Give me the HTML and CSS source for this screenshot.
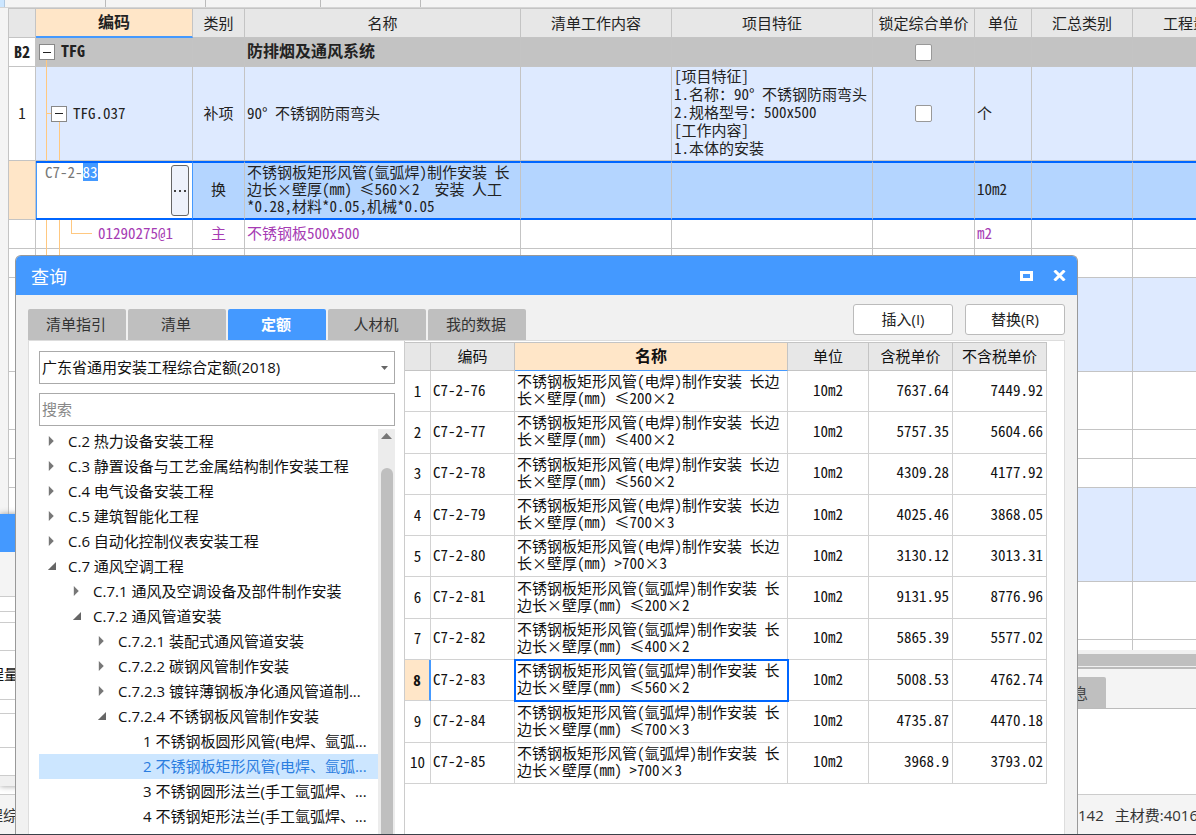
FILE: index.html
```html
<!DOCTYPE html>
<html lang="zh-CN">
<head>
<meta charset="utf-8">
<title>查询</title>
<link rel="stylesheet" href="styles.css">
</head>
<body>
<main class="app">
  <div class="topstrip"><i class="chip"></i><i class="seg seg-a"></i><i class="seg seg-b"></i><i class="seg seg-c"></i><i class="seg seg-b"></i></div>
  <div class="workspace">
    <div class="gutter"></div>
    <div class="sheet">
      <table class="grid">
        <colgroup><col class="c-no"><col class="c-code"><col class="c-kind"><col class="c-name"><col class="c-work"><col class="c-feat"><col class="c-lock"><col class="c-unit"><col class="c-sum"><col class="c-qty"></colgroup>
        <thead>
          <tr><th></th><th class="current">编码</th><th>类别</th><th>名称</th><th>清单工作内容</th><th>项目特征</th><th>锁定综合单价</th><th>单位</th><th>汇总类别</th><th>工程量</th></tr>
        </thead>
        <tbody>
          <tr class="r-group"><td class="no">B2</td><td class="code"><div class="node"><button class="toggle" aria-label="折叠"></button><span>TFG</span></div><i class="guide g1 from-node"></i></td><td></td><td>防排烟及通风系统</td><td></td><td></td><td class="mid"><input type="checkbox" aria-label="锁定综合单价"></td><td></td><td></td><td></td></tr>
          <tr class="r-item"><td class="no">1</td><td class="code"><i class="guide g1"></i><i class="guide g2 from-mid"></i><i class="arm"></i><div class="node lvl2"><button class="toggle" aria-label="折叠"></button><span>TFG.037</span></div></td><td class="mid">补项</td><td>90° 不锈钢防雨弯头</td><td></td><td class="feat">[项目特征]<br>1.名称：90° 不锈钢防雨弯头<br>2.规格型号：500x500<br>[工作内容]<br>1.本体的安装</td><td class="mid"><input type="checkbox" aria-label="锁定综合单价"></td><td>个</td><td></td><td></td></tr>
          <tr class="r-active"><td class="no"></td><td class="code edit"><div class="editor"><input id="code" type="text" value="C7-2-83" aria-label="编码"><button class="more" aria-label="更多"><svg viewBox="0 0 14 4"><path d="M1 1h2v2H1zM6 1h2v2H6zM11 1h2v2h-2z"/></svg></button></div></td><td class="mid">换</td><td>不锈钢板矩形风管(氩弧焊)制作安装 长边长×壁厚(mm) ≤560×2&nbsp; 安装 人工*0.28,材料*0.05,机械*0.05</td><td></td><td></td><td></td><td>10m2</td><td></td><td></td></tr>
          <tr class="r-mat"><td class="no"></td><td class="code"><i class="guide g1"></i><i class="guide g2"></i><i class="elbow"></i><div class="node lvl3">01290275@1</div></td><td class="mid">主</td><td>不锈钢板500x500</td><td></td><td></td><td></td><td>m2</td><td></td><td></td></tr>
          <tr class="r-line"><td></td><td class="code"><i class="guide g1"></i><i class="guide g2"></i></td><td></td><td></td><td></td><td></td><td></td><td></td><td></td><td></td></tr>
          <tr class="r-item"><td></td><td></td><td></td><td></td><td></td><td></td><td></td><td></td><td></td><td></td></tr>
          <tr class="r-double"><td></td><td></td><td></td><td></td><td></td><td></td><td></td><td></td><td></td><td></td></tr>
          <tr class="r-line"><td></td><td></td><td></td><td></td><td></td><td></td><td></td><td></td><td></td><td></td></tr>
          <tr class="r-line"><td></td><td></td><td></td><td></td><td></td><td></td><td></td><td></td><td></td><td></td></tr>
          <tr class="r-item"><td></td><td></td><td></td><td></td><td></td><td></td><td></td><td></td><td></td><td></td></tr>
          <tr class="r-double"><td></td><td></td><td></td><td></td><td></td><td></td><td></td><td></td><td></td><td></td></tr>
          <tr class="r-last"><td></td><td></td><td></td><td></td><td></td><td></td><td></td><td></td><td></td><td></td></tr>
        </tbody>
      </table>
    </div>
  </div>
  <div class="hscroll"></div>
  <div class="lowtabs"><div class="lowtab">信息</div></div>
  <div class="lowpane"></div>
  <footer class="status"><span class="st-left">程综</span><span class="st-right"><span>142</span><span>主材费:4016</span></span></footer>

  <aside class="backwin">
    <div class="bw-title"></div>
    <div class="bw-bar"></div>
    <div class="bw-row h15"></div>
    <div class="bw-row h11"></div>
    <div class="bw-row h28"></div>
    <div class="bw-row h49"><span>程量</span></div>
    <div class="bw-row h14"></div>
    <div class="bw-row h34"></div>
    <div class="bw-row h28"></div>
    <div class="bw-foot"></div>
  </aside>

  <section class="dialog" aria-label="查询">
    <header class="titlebar">
      <h1>查询</h1>
      <button aria-label="最大化"><svg width="13" height="10" viewBox="0 0 13 10"><path d="M1.500 1.500h10v7h-10z" fill="none" stroke="#fff" stroke-width="3"/></svg></button>
      <button aria-label="关闭"><svg width="13" height="11" viewBox="0 0 13 11"><path d="M1.500 .5l10 10M11.500 .5l-10 10" stroke="#fff" stroke-width="3"/></svg></button>
    </header>
    <div class="toolbar">
      <nav class="tabs"><button>清单指引</button><button>清单</button><button class="on">定额</button><button>人材机</button><button>我的数据</button></nav>
      <div class="actions"><button>插入(I)</button><button>替换(R)</button></div>
    </div>
    <div class="panes">
      <div class="side">
        <div class="picker">
          <select class="field" aria-label="定额库"><option>广东省通用安装工程综合定额(2018)</option></select>
          <svg width="7" height="4" viewBox="0 0 7 4"><path d="M0 0h7L3.500 4z" fill="#666"/></svg>
        </div>
        <input class="field" type="text" placeholder="搜索" aria-label="搜索">
        <div class="treebox">
          <ul class="tree">
            <li class="l1 shut">C.2 热力设备安装工程</li>
            <li class="l1 shut">C.3 静置设备与工艺金属结构制作安装工程</li>
            <li class="l1 shut">C.4 电气设备安装工程</li>
            <li class="l1 shut">C.5 建筑智能化工程</li>
            <li class="l1 shut">C.6 自动化控制仪表安装工程</li>
            <li class="l1 open">C.7 通风空调工程</li>
            <li class="l2 shut">C.7.1 通风及空调设备及部件制作安装</li>
            <li class="l2 open">C.7.2 通风管道安装</li>
            <li class="l3 shut">C.7.2.1 装配式通风管道安装</li>
            <li class="l3 shut">C.7.2.2 碳钢风管制作安装</li>
            <li class="l3 shut">C.7.2.3 镀锌薄钢板净化通风管道制...</li>
            <li class="l3 open">C.7.2.4 不锈钢板风管制作安装</li>
            <li class="l4">1 不锈钢板圆形风管(电焊、氩弧...</li>
            <li class="l4 picked">2 不锈钢板矩形风管(电焊、氩弧...</li>
            <li class="l4">3 不锈钢圆形法兰(手工氩弧焊、...</li>
            <li class="l4">4 不锈钢矩形法兰(手工氩弧焊、...</li>
          </ul>
          <div class="vscroll"><svg width="11" height="6" viewBox="0 0 11 6"><path d="M0 6L5.500 0 11 6z" fill="#777"/></svg><div class="thumb"></div></div>
        </div>
      </div>
      <div class="result">
        <table class="list">
          <colgroup><col class="q-no"><col class="q-code"><col class="q-name"><col class="q-unit"><col class="q-tax"><col class="q-net"></colgroup>
          <thead><tr><th></th><th>编码</th><th class="current">名称</th><th>单位</th><th>含税单价</th><th>不含税单价</th></tr></thead>
          <tbody>
            <tr><td>1</td><td>C7-2-76</td><td>不锈钢板矩形风管(电焊)制作安装 长边长×壁厚(mm) ≤200×2</td><td>10m2</td><td>7637.64</td><td>7449.92</td></tr>
            <tr><td>2</td><td>C7-2-77</td><td>不锈钢板矩形风管(电焊)制作安装 长边长×壁厚(mm) ≤400×2</td><td>10m2</td><td>5757.35</td><td>5604.66</td></tr>
            <tr><td>3</td><td>C7-2-78</td><td>不锈钢板矩形风管(电焊)制作安装 长边长×壁厚(mm) ≤560×2</td><td>10m2</td><td>4309.28</td><td>4177.92</td></tr>
            <tr><td>4</td><td>C7-2-79</td><td>不锈钢板矩形风管(电焊)制作安装 长边长×壁厚(mm) ≤700×3</td><td>10m2</td><td>4025.46</td><td>3868.05</td></tr>
            <tr><td>5</td><td>C7-2-80</td><td>不锈钢板矩形风管(电焊)制作安装 长边长×壁厚(mm) &gt;700×3</td><td>10m2</td><td>3130.12</td><td>3013.31</td></tr>
            <tr><td>6</td><td>C7-2-81</td><td>不锈钢板矩形风管(氩弧焊)制作安装 长边长×壁厚(mm) ≤200×2</td><td>10m2</td><td>9131.95</td><td>8776.96</td></tr>
            <tr><td>7</td><td>C7-2-82</td><td>不锈钢板矩形风管(氩弧焊)制作安装 长边长×壁厚(mm) ≤400×2</td><td>10m2</td><td>5865.39</td><td>5577.02</td></tr>
            <tr class="chosen"><td>8</td><td>C7-2-83</td><td>不锈钢板矩形风管(氩弧焊)制作安装 长边长×壁厚(mm) ≤560×2</td><td>10m2</td><td>5008.53</td><td>4762.74</td></tr>
            <tr><td>9</td><td>C7-2-84</td><td>不锈钢板矩形风管(氩弧焊)制作安装 长边长×壁厚(mm) ≤700×3</td><td>10m2</td><td>4735.87</td><td>4470.18</td></tr>
            <tr><td>10</td><td>C7-2-85</td><td>不锈钢板矩形风管(氩弧焊)制作安装 长边长×壁厚(mm) &gt;700×3</td><td>10m2</td><td>3968.9</td><td>3793.02</td></tr>
          </tbody>
        </table>
      </div>
    </div>
  </section>
</main>
<script src="app.js"></script>
</body>
</html>
```
FILE: app.js
```js
// Put the cursor in the code editor with the sequence number selected.
const code = document.getElementById("code");
code.focus();
code.setSelectionRange(5, 7);
```
FILE: styles.css
```css
* { box-sizing: border-box; }

:root {
  --ui: "Open Sans", "Noto Sans CJK SC", sans-serif;
  --mono: "Noto Sans Mono CJK SC", "Noto Sans CJK SC", monospace;
  --blue: #4499ff;
  --deep: #0066ff;
  --line: #c4c4c4;
  --peach: #ffe6c8;
}

body { margin: 0; font: 15px/20px var(--ui); color: #222; }
button, input, select { font: inherit; color: inherit; margin: 0; }

.app {
  position: relative;
  display: flex;
  flex-direction: column;
  height: 100vh;
  overflow: hidden;
  background: #f4f4f4;
  border-bottom: 1px solid #3a4048;
}

.topstrip { display: flex; flex: none; height: 8px; border-bottom: 1px solid #d4d4d4; }
.chip { width: 5px; background: #cce6ff; border-right: 1px solid #b0c8e0; }
.seg { border-right: 1px solid #bbb; }
.seg-a { width: 101px; }
.seg-b { width: 100px; }
.seg-c { width: 115px; }

.workspace { display: flex; flex: none; }
.gutter { flex: none; width: 9px; border-right: 1px solid var(--line); }
.sheet { flex: 1; min-width: 0; overflow: hidden; background: #fff; }

/* Main bill grid */
.grid { table-layout: fixed; width: 1230px; border-collapse: separate; border-spacing: 0; font: 15px/17px var(--mono); }
.c-no { width: 27px; }
.c-code { width: 157px; }
.c-kind { width: 52px; }
.c-name { width: 276px; }
.c-work { width: 151px; }
.c-feat { width: 201px; }
.c-lock { width: 102px; }
.c-unit { width: 57px; }
.c-sum { width: 101px; }
.grid th { height: 30px; padding: 0 0 2px; background: #e7e7e7; border: solid var(--line); border-width: 1px 1px 1px 0; font-weight: 400; white-space: nowrap; }
.grid th.current { background: var(--peach); border-bottom: 2px solid var(--blue); font-size: 16px; font-weight: 700; }
.grid td { position: relative; padding: 0 2px 3px; border: solid var(--line); border-width: 0 1px 1px 0; }
.grid td.no { padding: 0 0 2px; text-align: center; background: #fff; }
.grid td.mid { text-align: center; }
.grid td.feat { line-height: 18px; white-space: nowrap; }
.grid td.code { padding-bottom: 0; }
.grid td:first-child { background: #fff; }
.r-group { height: 29px; font-size: 16px; font-weight: 700; }
.r-group td { background: #c3c3c3; }
.r-item { height: 94px; }
.r-item td { background: #deeaff; }
.r-active { height: 59px; }
.grid .r-active td { padding-bottom: 4px; background: #b4d5ff; border-top: 2px solid var(--deep); border-bottom: 2px solid var(--deep); }
.grid .r-active td.no { background: var(--peach); border-color: var(--line); border-top: 0; border-bottom-width: 1px; }
.grid .r-active td.edit { padding: 0; background: #fff; border-right-color: var(--blue); }
.r-mat { height: 29px; color: #a63cb4; }
.r-line { height: 29px; }
.r-double { height: 58px; }
.r-last { height: 10px; }
.grid .r-last td { padding: 0; border-bottom: 0; }

.node { display: flex; align-items: center; gap: 6px; padding-left: 1px; }
.node span, .node.lvl3 { padding-bottom: 3px; }
.lvl2 { padding-left: 13px; }
.lvl3 { padding-left: 60px; }
.toggle { position: relative; z-index: 1; flex: none; width: 16px; height: 16px; padding: 3px; border: 1px solid #888; background: #fff; display: grid; place-items: center; }
.toggle::before { content: ""; width: 8px; height: 1px; background: #222; }
.guide { position: absolute; top: 0; bottom: -1px; width: 1px; background: #ffc880; }
.g1 { left: 10px; }
.g2 { left: 23px; }
.from-node { top: 22px; }
.from-mid { top: 54px; }
.arm { position: absolute; left: 10px; top: 46px; width: 6px; height: 1px; background: #ffc880; }
.elbow { position: absolute; left: 35px; top: 0; width: 21px; height: 14px; border: solid #ffc880; border-width: 0 0 1px 1px; }

.editor { display: flex; align-items: flex-start; height: 55px; padding: 0 3px 0 0; border-left: 1px solid var(--blue); }
.editor input { flex: 1; min-width: 0; height: 18px; padding: 0 0 2px 8px; border: 0; outline: 0; background: none; color: #777; }
.editor input::selection { background: var(--blue); color: #fff; }
.more { align-self: center; display: grid; place-items: center; width: 18px; height: 51px; padding: 0; border: 1px solid #666; border-radius: 3px; background: #eef2fb; }
.more svg { width: 14px; height: 4px; fill: #444; }

input[type="checkbox"] { appearance: none; display: block; width: 17px; height: 17px; margin: 0 auto; border: 1px solid #999; border-radius: 2px; background: #fff; }
.grid td:has(input[type="checkbox"]) { padding-bottom: 0; }

/* Lower panel */
.hscroll { flex: none; height: 17px; border: solid #f0f0f0; border-width: 4px 0 1px; background: #bfbfbf; }
.lowtabs { flex: none; display: flex; justify-content: flex-end; height: 42px; padding: 8px 90px 0 0; border-top: 2px solid #bbb; border-bottom: 1px solid #bbb; }
.lowtab { display: flex; align-items: center; padding: 0 18px; background: #bfbfbf; border-radius: 2px 2px 0 0; color: #444; }
.lowpane { flex: 1; background: #fff; }
.status { flex: none; display: flex; justify-content: space-between; align-items: center; height: 40px; border-top: 1px solid #ccc; white-space: nowrap; color: #333; }
.st-left { margin-left: -12px; }
.st-right { display: flex; gap: 11px; width: 118px; overflow: hidden; }

/* Window partly hidden behind the dialog */
.backwin { position: absolute; left: 0; top: 514px; width: 60px; background: #fff; box-shadow: 0 0 6px #999; color: #111; }
.bw-title { height: 38px; background: var(--blue); }
.bw-bar { height: 45px; background: #f4f4f4; border-bottom: 1px solid #ccc; }
.bw-row { display: flex; align-items: center; border-bottom: 1px solid #ccc; white-space: nowrap; overflow: hidden; }
.bw-row span { margin-left: -11px; padding-bottom: 2px; }
.h11 { height: 11px; }
.h14 { height: 14px; }
.h15 { height: 15px; }
.h28 { height: 28px; }
.h34 { height: 34px; }
.h49 { height: 49px; }
.bw-foot { height: 10px; background: #f0f0f0; }

/* Query dialog */
.dialog { position: absolute; left: 15px; right: 118px; top: 255px; bottom: 0; display: flex; flex-direction: column; overflow: hidden; background: #f1f1f1; border: 1px solid #999; border-bottom: 0; border-radius: 6px 6px 0 0; }
.titlebar { flex: none; display: flex; align-items: center; gap: 20px; height: 39px; padding: 0 11px 0 15px; background: var(--blue); color: #fff; }
.titlebar h1 { flex: 1; margin: 0; padding-top: 2px; font-size: 18px; font-weight: 400; line-height: 24px; }
.titlebar button { display: grid; place-items: center; padding: 0; border: 0; background: none; }
.toolbar { flex: none; display: flex; justify-content: space-between; align-items: flex-end; height: 45px; padding: 0 12px; }
.tabs { display: flex; gap: 2px; }
.tabs button { width: 98px; height: 31px; padding: 0 2px 2px 0; border: 0; border-radius: 2px 2px 0 0; background: #bfbfbf; color: #333; }
.tabs .on { background: var(--blue); color: #fff; font-weight: 700; }
.actions { display: flex; gap: 12px; padding-bottom: 5px; }
.actions button { width: 100px; height: 31px; padding: 0 0 2px; border: 1px solid #bbb; border-radius: 3px; background: #fff; }
.panes { flex: 1; min-height: 0; display: flex; margin: 0 12px; background: #fff; border: solid #ddd; border-width: 1px 1px 0; }
.side { flex: none; display: flex; flex-direction: column; gap: 9px; width: 375px; padding: 10px 9px 0 10px; color: #111; }
.picker { position: relative; display: flex; }
.picker svg { position: absolute; right: 7px; top: 15px; pointer-events: none; }
.field { flex: none; width: 100%; height: 33px; padding: 0 2px 1px; border: 1px solid #aaa; border-radius: 0; outline: 0; background: #fff; }
select.field { appearance: none; }
.field::placeholder { color: #888; opacity: 1; }
.treebox { flex: 1; min-height: 0; display: flex; margin-top: -6px; }
.tree { flex: 1; min-width: 0; margin: 0; padding: 0; list-style: none; overflow: hidden; }
.tree li { display: flex; align-items: center; height: 25px; padding-bottom: 1px; white-space: nowrap; }
.tree li::before { content: ""; flex: none; width: 9px; height: 10px; margin-right: 12px; }
.shut::before { background: #777; clip-path: polygon(20% 0, 75% 50%, 20% 100%); }
.open::before { background: #666; clip-path: polygon(100% 10%, 100% 90%, 10% 90%); }
.l1 { padding-left: 8px; }
.l2 { padding-left: 33px; }
.l3 { padding-left: 58px; }
.l4 { padding-left: 83px; }
.tree .picked { background: #cce6ff; color: #2b7de0; }
.vscroll { flex: none; display: flex; flex-direction: column; align-items: center; gap: 29px; width: 17px; padding-top: 4px; background: #ececec; }
.vscroll svg { flex: none; }
.thumb { flex: 1; width: 12px; border-radius: 6px 6px 0 0; background: #bfbfbf; }

.result { flex: 1; min-width: 0; overflow: hidden; border-left: 1px solid #ccc; padding-top: 1px; }
.list { table-layout: fixed; width: 642px; height: 442px; border-collapse: separate; border-spacing: 0; font: 15px/17px var(--mono); color: #111; }
.q-no { width: 26px; }
.q-code { width: 84px; }
.q-name { width: 273px; }
.q-unit { width: 81px; }
.q-tax { width: 84px; }
.q-net { width: 94px; }
.list th { height: 29px; padding: 0 0 2px; background: #e7e7e7; border: solid var(--line); border-width: 1px 1px 1px 0; font-weight: 400; white-space: nowrap; }
.list th.current { background: var(--peach); border-bottom-color: var(--blue); font-size: 16px; font-weight: 700; }
.list td { padding: 0 2px 4px; border: solid #d2d2d2; border-width: 0 1px 1px 0; }
.list td:first-child { padding: 0 0 2px; text-align: center; }
.list td:nth-child(4) { text-align: center; }
.list td:nth-child(n+5) { padding-right: 3px; text-align: right; }
.list .chosen td:first-child { background: var(--peach); border-right: 2px solid var(--blue); font-weight: 700; }
.list .chosen td:nth-child(3) { outline: 2px solid var(--deep); outline-offset: -1px; }
```
